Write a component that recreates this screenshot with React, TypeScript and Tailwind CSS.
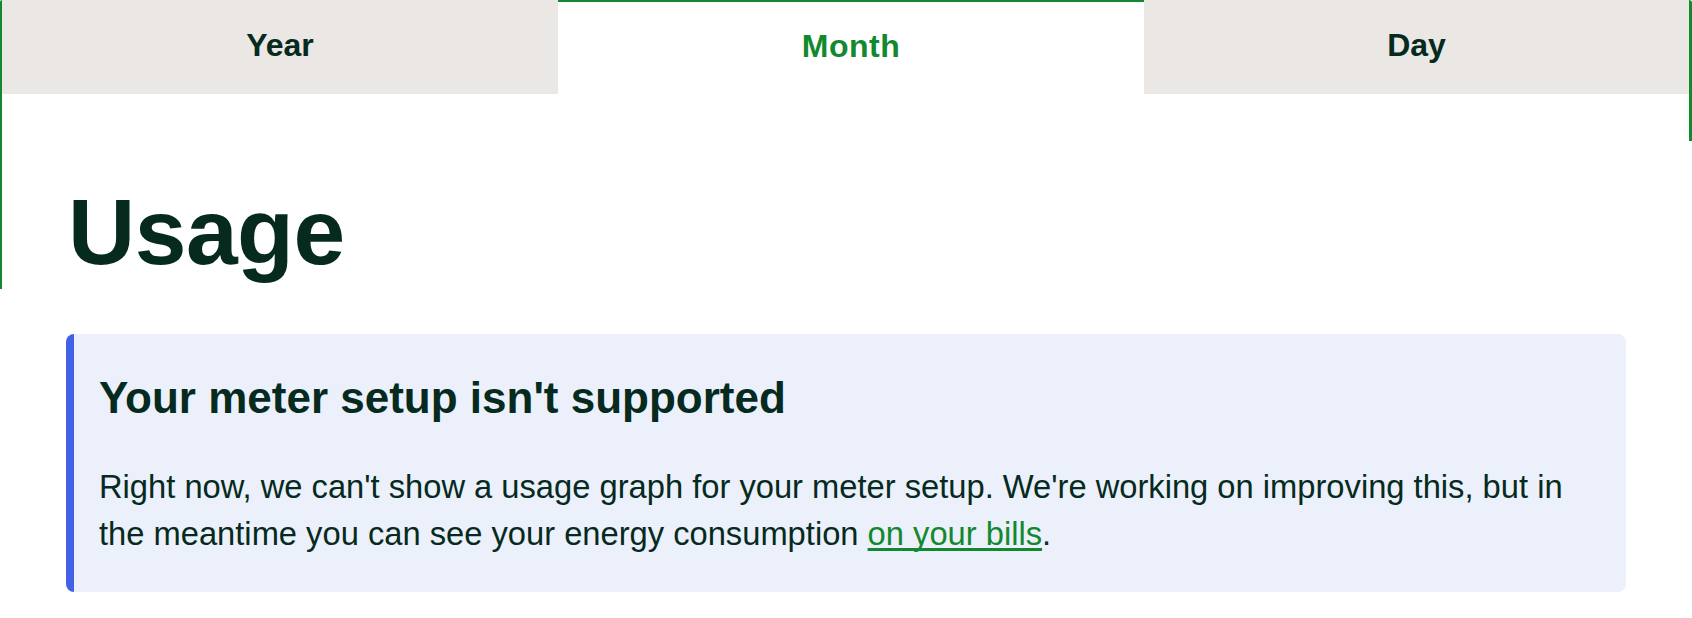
import React from 'react';

const TABS = [
    { id: 'year', label: 'Year', width: 'w-[556px]' },
    { id: 'month', label: 'Month', width: 'w-[586px]' },
    { id: 'day', label: 'Day', width: 'flex-1' },
];

const Tab: React.FC<{ label: string, width: string, active: boolean }> = ({ label, width, active }) => {
    return (
        <button
            className={`${width} h-[94px] pb-[4px] flex items-center justify-center text-[32px] font-bold ${
                active ? 'bg-white text-[#12882f] border-t-2 border-[#12882f] tracking-[0.5px]' : 'bg-[#eae7e4] text-[#062a1e]'
            }`}
            aria-selected={active}
        >
            {label}
        </button>
    );
};

const App = () => {
    const activeTab = 'month';

    return (
        <div className="relative w-full min-h-[618px] bg-white text-[#062a1e] font-['Liberation_Sans',Arial,sans-serif]">
            {/* focus outline edges around the tab panel */}
            <div className="absolute left-0 top-0 w-[2px] h-[289px] bg-[#12882f] rounded-tl-[3px]" />
            <div className="absolute right-0 top-0 w-[3px] h-[141px] bg-[#12882f] rounded-tr-[3px]" />

            <div className="flex pl-[2px] pr-[3px]">
                {TABS.map(tab => (
                    <Tab key={tab.id} label={tab.label} width={tab.width} active={tab.id === activeTab} />
                ))}
            </div>

            <div className="px-[66px]">
                <h1 className="mt-[92px] ml-[2px] text-[93px] leading-[93px] font-bold tracking-[-0.5px]">Usage</h1>

                <div className="mt-[55px] rounded-lg border-l-[8px] border-[#4361e6] bg-[#ebf0fb] pl-[25px] pr-[30px] pt-[38px] pb-[35px]">
                    <h2 className="text-[44px] leading-[52px] font-bold">Your meter setup isn't supported</h2>
                    <p className="mt-[39px] text-[32.7px] leading-[47px]">
                        Right now, we can't show a usage graph for your meter setup. We're working on improving this, but in the meantime you can see your energy consumption{' '}
                        <a href="#" className="text-[#12882f] underline underline-offset-[3px] [text-decoration-skip-ink:none]">on your bills</a>.
                    </p>
                </div>
            </div>
        </div>
    );
};

export default App;
